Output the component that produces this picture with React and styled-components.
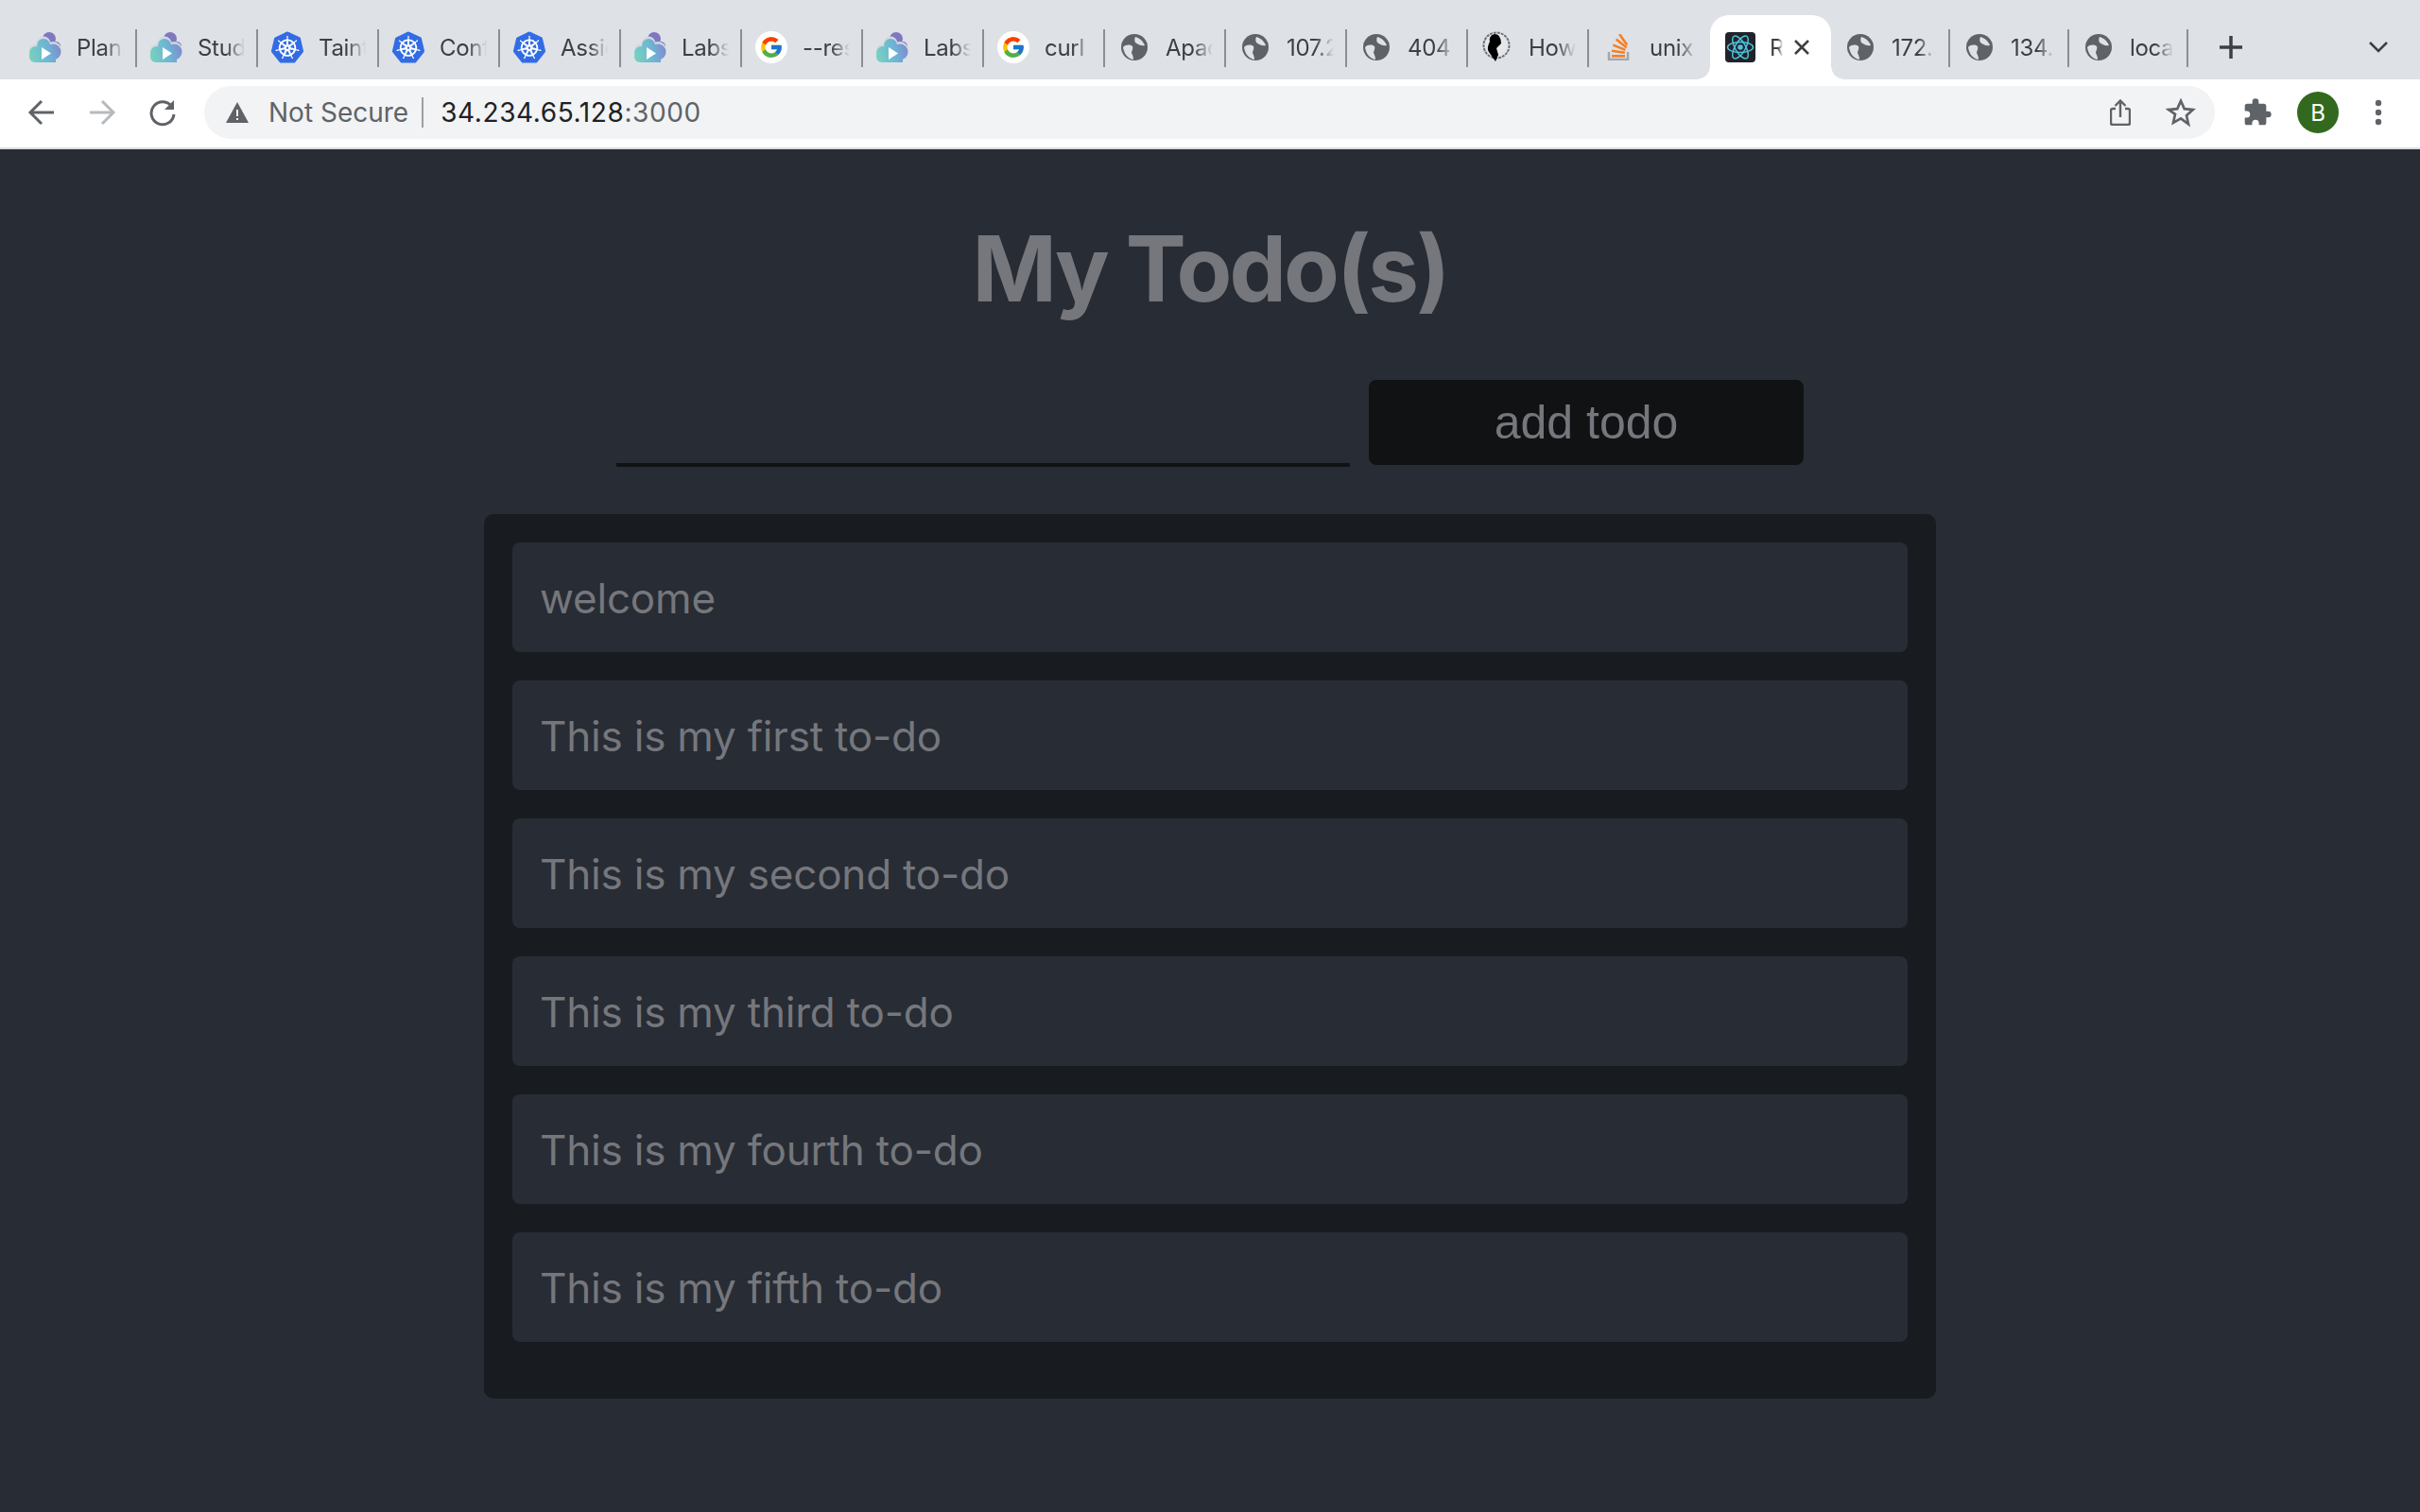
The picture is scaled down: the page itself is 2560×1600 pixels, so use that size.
import React from "react";
import styled, { createGlobalStyle } from "styled-components";
import { SiKubernetes } from "react-icons/si";
import { FcGoogle } from "react-icons/fc";

const GlobalStyle = createGlobalStyle`
  html, body { margin: 0; padding: 0; background: #282c34; }
  * { box-sizing: border-box; }
`;

const Chrome = styled.header`
  font-family: Inter, "Liberation Sans", sans-serif;
  background: #fff;
`;

const TabStrip = styled.div`
  height: 84px;
  background: #dee1e6;
  display: flex;
  align-items: flex-end;
  padding-left: 17px;
`;

const Tab = styled.div`
  width: ${(p) => p.$w || 128}px;
  height: 68px;
  position: relative;
  display: flex;
  align-items: center;
  padding: 0 0 0 ${(p) => p.$pad || 14}px;
  background: ${(p) => (p.$active ? "#fff" : "transparent")};
  border-radius: ${(p) => (p.$active ? "20px 20px 0 0" : "0")};
  &::after {
    content: "";
    display: ${(p) => (p.$active || p.$noSep ? "none" : "block")};
    position: absolute;
    right: 0;
    top: 15px;
    width: 2px;
    height: 40px;
    background: #8b8e92;
  }
`;

// the concave corners at the foot of the active tab
const TabFlare = styled.span`
  position: absolute;
  bottom: 0;
  ${(p) => (p.$side === "left" ? "left: -14px;" : "right: -14px;")}
  width: 14px;
  height: 14px;
  background: radial-gradient(
    circle at ${(p) => (p.$side === "left" ? "0 0" : "100% 0")},
    transparent 13.5px,
    #fff 14px
  );
`;

const TabIcon = styled.span`
  width: 34px;
  height: 34px;
  flex: none;
  display: flex;
  align-items: center;
  justify-content: center;
`;

const TabLabel = styled.span`
  margin-left: ${(p) => p.$gap ?? 16}px;
  width: ${(p) => p.$width || 50}px;
  overflow: hidden;
  white-space: nowrap;
  font-size: 24px;
  letter-spacing: -0.3px;
  color: #3c4043;
  -webkit-mask-image: linear-gradient(to right, #000 60%, transparent 100%);
  mask-image: linear-gradient(to right, #000 60%, transparent 100%);
`;

const TabClose = styled.span`
  width: 24px;
  height: 24px;
  margin-left: 8px;
  display: flex;
  align-items: center;
  justify-content: center;
`;

const NewTab = styled.button`
  margin-left: 25px;
  margin-bottom: 14px;
  width: 40px;
  height: 40px;
  border: 0;
  padding: 0;
  background: none;
  display: flex;
  align-items: center;
  justify-content: center;
`;

const TabMenu = styled.button`
  margin-left: auto;
  margin-right: 24px;
  margin-bottom: 14px;
  width: 40px;
  height: 40px;
  border: 0;
  padding: 0;
  background: none;
  display: flex;
  align-items: center;
  justify-content: center;
`;

const Toolbar = styled.div`
  height: 74px;
  padding: 8px 0 10px 24px;
  display: flex;
  align-items: center;
  border-bottom: 2px solid #dadce0;
`;

const NavButton = styled.button`
  width: 40px;
  height: 40px;
  margin-right: ${(p) => p.$mr ?? 24}px;
  border: 0;
  padding: 0;
  background: none;
  display: flex;
  align-items: center;
  justify-content: center;
`;

const Omnibox = styled.div`
  width: 2127px;
  height: 56px;
  margin-left: 24px;
  border-radius: 28px;
  background: #f1f3f4;
  display: flex;
  align-items: center;
  padding: 0 16px 0 22px;
`;

const NotSecure = styled.span`
  margin-left: 20px;
  font-size: 28px;
  color: #5f6368;
`;

const Divider = styled.span`
  width: 2px;
  height: 32px;
  margin: 0 18px 0 14px;
  background: #9aa0a6;
`;

const Url = styled.span`
  font-size: 28px;
  letter-spacing: 0.6px;
  color: #202124;
  flex: 1;
  & > em {
    font-style: normal;
    color: #5f6368;
  }
`;

const OmniIcon = styled.span`
  width: 40px;
  height: 40px;
  margin-left: 24px;
  display: flex;
  align-items: center;
  justify-content: center;
`;

const ToolIcon = styled(OmniIcon)`
  margin-left: ${(p) => p.$ml ?? 0}px;
`;

const Avatar = styled.span`
  width: 44px;
  height: 44px;
  margin-left: 22px;
  border-radius: 50%;
  background: #33691e;
  color: #fff;
  font-size: 24px;
  display: flex;
  align-items: center;
  justify-content: center;
`;

const Page = styled.main`
  min-height: 1442px;
  background: #282c34;
  color: #75777c;
  font-family: Inter, "Liberation Sans", sans-serif;
  display: flex;
  flex-direction: column;
  align-items: center;
`;

const Title = styled.h1`
  margin: 68px 0 0;
  font-size: 96px;
  line-height: 116px;
  font-weight: 700;
  letter-spacing: -2.9px;
  color: #75777c;
`;

const Form = styled.form`
  margin-top: 60px;
  display: flex;
  align-items: flex-end;
  gap: 20px;
`;

const TodoInput = styled.input`
  width: 776px;
  height: 90px;
  border: 0;
  border-bottom: 4px solid #101214;
  background: transparent;
  outline: none;
  margin-bottom: -2px;
`;

const AddButton = styled.button`
  width: 460px;
  height: 90px;
  border: 0;
  border-radius: 8px;
  background: #101214;
  color: #75777c;
  font-family: "Liberation Sans", Arial, sans-serif;
  font-size: 50px;
`;

const Panel = styled.section`
  width: 1536px;
  margin-top: 52px;
  padding: 30px;
  border-radius: 10px;
  background: #181b20;
`;

const TodoItem = styled.div`
  height: 116px;
  margin-bottom: 30px;
  padding: 2px 30px 0 29px;
  border-radius: 8px;
  background: #282c34;
  display: flex;
  align-items: center;
  font-size: 44px;
  letter-spacing: -0.2px;
  color: #75777c;
`;

const GoogleBadge = styled.span`
  width: 34px;
  height: 34px;
  border-radius: 50%;
  background: #fff;
  display: flex;
  align-items: center;
  justify-content: center;
`;

const KubeBadge = styled.span`
  width: 34px;
  height: 34px;
  display: flex;
  align-items: center;
  justify-content: center;
  color: #326ce5;
  background: radial-gradient(circle, #fff 62%, transparent 64%);
`;

const CloudIcon = () => (
  <svg width="34" height="34" viewBox="0 0 34 34">
    <defs>
      <linearGradient id="cloudFill" gradientUnits="userSpaceOnUse" x1="2" y1="28" x2="32" y2="20">
        <stop offset="0" stopColor="#76d0c0" />
        <stop offset="0.6" stopColor="#6db4d4" />
        <stop offset="1" stopColor="#7f8fce" />
      </linearGradient>
    </defs>
    <g fill="#7f78bf">
      <circle cx="21" cy="8" r="7" />
      <circle cx="28" cy="16" r="5" />
    </g>
    <g fill="#d4dadf">
      <circle cx="7" cy="21" r="7.500" />
      <circle cx="15" cy="13" r="7.500" />
      <circle cx="25" cy="20" r="9" />
    </g>
    <g fill="url(#cloudFill)">
      <circle cx="7" cy="23" r="7" />
      <circle cx="15" cy="15" r="7" />
      <circle cx="25" cy="22" r="8.500" />
      <circle cx="6" cy="27" r="6" />
      <rect x="6" y="18" width="22" height="15" />
    </g>
    <path d="M13 17l10 6.500-10 6.500z" fill="#fff" />
  </svg>
);

const KubeIcon = () => (
  <KubeBadge>
    <SiKubernetes size={34} />
  </KubeBadge>
);

const GoogleIcon = () => (
  <GoogleBadge>
    <FcGoogle size={26} />
  </GoogleBadge>
);

const GlobeIcon = () => (
  <svg width="28" height="28" viewBox="0 0 28 28">
    <circle cx="14" cy="14" r="14" fill="#5f6368" />
    <path d="M15 3c4 1 8 4 10 9-4 1-7-1-10-3-1-2-1-4 0-6z" fill="#dee1e6" />
    <path d="M2 14c3-3 7-3 10-1 1 3-1 5-1 7 1 2 2 4 2 7-6-1-10-6-11-13z" fill="#dee1e6" />
  </svg>
);

const TuxIcon = () => (
  <svg width="34" height="34" viewBox="0 0 34 34">
    <circle cx="16" cy="15" r="13.500" fill="#e4e6e9" stroke="#6f7276" strokeWidth="2" strokeDasharray="3 1" />
    <path d="M14 3c-4 1-6 4-5 8-2 4-3 8-1 11l7 10 3-7-2-7 5-5c0-5-2-10-7-10z" fill="#000" />
  </svg>
);

const StackIcon = () => (
  <svg width="26" height="28" viewBox="0 0 26 28">
    <path d="M3 19v8h20v-8" fill="none" stroke="#a5a7aa" strokeWidth="2.500" />
    <g fill="#f48024">
      <rect x="6" y="22" width="14" height="2.600" />
      <rect x="6" y="17.500" width="14" height="2.600" transform="rotate(8 13 18)" />
      <rect x="7" y="13" width="14" height="2.600" transform="rotate(22 14 14)" />
      <rect x="9" y="8.500" width="14" height="2.600" transform="rotate(38 16 10)" />
      <rect x="11" y="4.500" width="14" height="2.600" transform="rotate(55 18 6)" />
    </g>
  </svg>
);

const ReactIcon = () => (
  <svg width="32" height="32" viewBox="0 0 32 32">
    <rect width="32" height="32" rx="4" fill="#20232a" />
    <g fill="none" stroke="#4fc3dc" strokeWidth="1.500">
      <ellipse cx="16" cy="16" rx="13.500" ry="5.500" />
      <ellipse cx="16" cy="16" rx="13.500" ry="5.500" transform="rotate(60 16 16)" />
      <ellipse cx="16" cy="16" rx="13.500" ry="5.500" transform="rotate(120 16 16)" />
    </g>
    <circle cx="16" cy="16" r="2.800" fill="#4fc3dc" />
  </svg>
);

const tabs = [
  { icon: <CloudIcon />, label: "Planning" },
  { icon: <CloudIcon />, label: "Study" },
  { icon: <KubeIcon />, label: "Taints" },
  { icon: <KubeIcon />, label: "Configure" },
  { icon: <KubeIcon />, label: "Assign" },
  { icon: <CloudIcon />, label: "Labs" },
  { icon: <GoogleIcon />, label: "--restart" },
  { icon: <CloudIcon />, label: "Labs" },
  { icon: <GoogleIcon />, label: "curl" },
  { icon: <GlobeIcon />, label: "Apache" },
  { icon: <GlobeIcon />, label: "107.21" },
  { icon: <GlobeIcon />, label: "404" },
  { icon: <TuxIcon />, label: "How" },
  { icon: <StackIcon />, label: "unix" },
];

const afterTabs = [
  { icon: <GlobeIcon />, label: "172.31" },
  { icon: <GlobeIcon />, label: "134.20" },
  { icon: <GlobeIcon />, label: "localhost" },
];

const todos = [
  "welcome",
  "This is my first to-do",
  "This is my second to-do",
  "This is my third to-do",
  "This is my fourth to-do",
  "This is my fifth to-do",
];

export default function App() {
  return (
    <>
      <GlobalStyle />
      <Chrome>
        <TabStrip>
          {tabs.map((t, i) => (
            <Tab key={i} $noSep={i === 13}>
              <TabIcon>{t.icon}</TabIcon>
              <TabLabel>{t.label}</TabLabel>
            </Tab>
          ))}
          <Tab $active $pad={15}>
            <TabFlare $side="left" />
            <TabFlare $side="right" />
            <TabIcon>
              <ReactIcon />
            </TabIcon>
            <TabLabel $gap={14} $width={14}>
              React App
            </TabLabel>
            <TabClose>
              <svg width="18" height="18" viewBox="0 0 18 18">
                <path d="M2 2l14 14M16 2L2 16" stroke="#3c4043" strokeWidth="2.500" />
              </svg>
            </TabClose>
          </Tab>
          {afterTabs.map((t, i) => (
            <Tab key={i} $w={126}>
              <TabIcon>{t.icon}</TabIcon>
              <TabLabel $width={46}>{t.label}</TabLabel>
            </Tab>
          ))}
          <NewTab aria-label="New tab">
            <svg width="26" height="26" viewBox="0 0 26 26">
              <path d="M13 1v24M1 13h24" stroke="#3c4043" strokeWidth="3.500" />
            </svg>
          </NewTab>
          <TabMenu aria-label="Search tabs">
            <svg width="22" height="14" viewBox="0 0 22 14">
              <path d="M2 2l9 9 9-9" fill="none" stroke="#3c4043" strokeWidth="2.500" />
            </svg>
          </TabMenu>
        </TabStrip>
        <Toolbar>
          <NavButton aria-label="Back">
            <svg width="30" height="28" viewBox="0 0 30 28">
              <path d="M28 14H4M15 2L3 14l12 12" fill="none" stroke="#5f6368" strokeWidth="3" />
            </svg>
          </NavButton>
          <NavButton aria-label="Forward">
            <svg width="30" height="28" viewBox="0 0 30 28">
              <path d="M2 14h24M15 2l12 12-12 12" fill="none" stroke="#b7babd" strokeWidth="3" />
            </svg>
          </NavButton>
          <NavButton aria-label="Reload" $mr={0}>
            <svg width="30" height="30" viewBox="0 0 30 30">
              <path d="M25 9a12 12 0 1 0 2 8" fill="none" stroke="#5f6368" strokeWidth="3" />
              <path d="M27 2v10H17z" fill="#5f6368" />
            </svg>
          </NavButton>
          <Omnibox>
            <svg width="26" height="24" viewBox="0 0 26 24">
              <path d="M13 1l12 22H1z" fill="#5f6368" />
              <path d="M12 9h2v7h-2zM12 18h2v2h-2z" fill="#f1f3f4" />
            </svg>
            <NotSecure>Not Secure</NotSecure>
            <Divider />
            <Url>
              34.234.65.128<em>:3000</em>
            </Url>
            <OmniIcon>
              <svg width="22" height="28" viewBox="0 0 22 28">
                <path
                  d="M6 10H3a2 2 0 0 0-2 2v13a2 2 0 0 0 2 2h16a2 2 0 0 0 2-2V12a2 2 0 0 0-2-2h-3M11 19V2M5.500 7L11 1.500 16.500 7"
                  fill="none"
                  stroke="#5f6368"
                  strokeWidth="2.400"
                />
              </svg>
            </OmniIcon>
            <OmniIcon>
              <svg width="32" height="32" viewBox="0 0 24 24">
                <path d="M12 2.800l2.800 6.300 6.800.7-5.100 4.600 1.500 6.800L12 16.800l-6 3.400 1.500-6.800L2.400 9.800l6.800-.7z" fill="none" stroke="#5f6368" strokeWidth="2" />
              </svg>
            </OmniIcon>
          </Omnibox>
          <ToolIcon $ml={25}>
            <svg width="32" height="32" viewBox="0 0 24 24">
              <path
                d="M20.500 11H19V7a2 2 0 0 0-2-2h-4V3.500a2.500 2.500 0 0 0-5 0V5H4a2 2 0 0 0-2 2v3.800h1.500a2.700 2.700 0 0 1 0 5.400H2V20a2 2 0 0 0 2 2h3.800v-1.500a2.700 2.700 0 0 1 5.400 0V22H17a2 2 0 0 0 2-2v-4h1.500a2.500 2.500 0 0 0 0-5z"
                fill="#5f6368"
              />
            </svg>
          </ToolIcon>
          <Avatar>B</Avatar>
          <ToolIcon $ml={22}>
            <svg width="8" height="28" viewBox="0 0 8 28">
              <circle cx="4" cy="4" r="3.200" fill="#5f6368" />
              <circle cx="4" cy="14" r="3.200" fill="#5f6368" />
              <circle cx="4" cy="24" r="3.200" fill="#5f6368" />
            </svg>
          </ToolIcon>
        </Toolbar>
      </Chrome>
      <Page>
        <Title>My Todo(s)</Title>
        <Form>
          <TodoInput />
          <AddButton type="button">add todo</AddButton>
        </Form>
        <Panel>
          {todos.map((t) => (
            <TodoItem key={t}>{t}</TodoItem>
          ))}
        </Panel>
      </Page>
    </>
  );
}
